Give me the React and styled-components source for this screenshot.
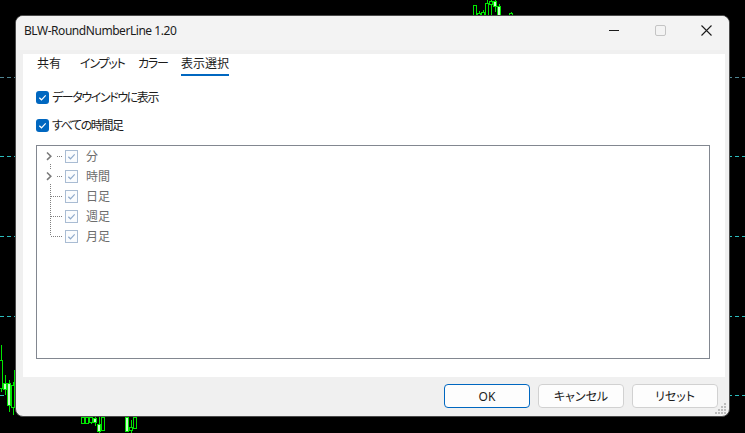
import React from 'react'
import styled, { createGlobalStyle } from 'styled-components'

const GlobalStyle = createGlobalStyle`
    html, body {
        margin: 0;
        padding: 0;
        background: #000;
    }
    * {
        box-sizing: border-box;
    }
`

const FONT = `"Noto Sans", "Noto Sans CJK JP", sans-serif`

// candles peeking out round the dialog: [x, wickTop, wickBottom, bodyTop, bodyBottom, filled]
const candles = [
    [1, 345, 392, 360, 388, false],
    [5, 375, 395, 383, 389, true],
    [9, 380, 412, 383, 405, true],
    [13, 382, 415, 385, 407, false],
    [16, 362, 390, 370, 387, false],
    [83, 417, 424, 417, 423, false],
    [87, 417, 424, 417, 423, false],
    [91, 417, 424, 417, 422, false],
    [95, 417, 426, 418, 422, true],
    [99, 417, 433, 424, 431, true],
    [103, 417, 431, 417, 430, false],
    [127, 417, 432, 417, 431, true],
    [131, 420, 433, 427, 430, false],
    [135, 417, 429, 417, 428, false],
    [475, 5, 15, 5, 15, false],
    [479, 11, 15, 13, 15, false],
    [483, 10, 15, 12, 15, false],
    [487, 0, 15, 3, 15, false],
    [491, 0, 15, 1, 4, false],
    [495, 0, 12, 1, 6, true],
    [499, 4, 15, 6, 15, true],
    [511, 12, 15, 13, 15, false],
]

const gridLines = [
    { y: 77.5, color: '#4f8592' },
    { y: 156.5, color: '#2bbcbc' },
    { y: 236.5, color: '#2bbcbc' },
    { y: 316.5, color: '#2bbcbc' },
    { y: 395.5, color: '#2bbcbc' },
]

const Chart = () => (
    <ChartSvg width="745" height="433" viewBox="0 0 745 433">
        {gridLines.map((l) => (
            <line key={l.y} x1="0" x2="745" y1={l.y} y2={l.y} stroke={l.color} strokeDasharray="4 3" />
        ))}
        {candles.map(([x, wt, wb, bt, bb, filled], i) => (
            <g key={i} shapeRendering="crispEdges">
                <line x1={x + 0.5} x2={x + 0.5} y1={wt} y2={wb} stroke="#00e600" />
                <rect
                    x={x - 1.5}
                    y={bt + 0.5}
                    width="3"
                    height={Math.max(bb - bt, 1)}
                    fill={filled ? '#c8ffc8' : '#000'}
                    stroke="#00e600"
                />
            </g>
        ))}
    </ChartSvg>
)

const CheckMark = ({ color }) => (
    <svg width="13" height="13" viewBox="0 0 13 13">
        <path d="M3.3 6.7 L5.5 8.8 L9.7 4.3" fill="none" stroke={color} strokeWidth="1.2" />
    </svg>
)

const Guide = ({ kind }) => (
    <svg width="28" height="20" viewBox="0 0 28 20" shapeRendering="crispEdges">
        {kind === 'first' && <line x1="13.5" x2="13.5" y1="10" y2="20" stroke="#808080" strokeDasharray="1 1" />}
        {kind === 'mid' && <line x1="13.5" x2="13.5" y1="0" y2="20" stroke="#808080" strokeDasharray="1 1" />}
        {kind === 'last' && <line x1="13.5" x2="13.5" y1="0" y2="10" stroke="#808080" strokeDasharray="1 1" />}
        {kind === 'expand' && <line x1="13.5" x2="13.5" y1="0" y2="20" stroke="#808080" strokeDasharray="1 1" />}
        <line x1="14" x2="25" y1="10.5" y2="10.5" stroke="#808080" strokeDasharray="1 1" />
        {(kind === 'first' || kind === 'expand') && (
            <>
                <rect x="7" y="3" width="12" height="14" fill="#fff" />
                <path
                    d="M10 6.5 L13.8 10.2 L10 13.9"
                    fill="none"
                    stroke="#7a7a7a"
                    strokeWidth="1.6"
                    shapeRendering="geometricPrecision"
                />
            </>
        )}
    </svg>
)

const treeItems = [
    { label: '分', kind: 'first' },
    { label: '時間', kind: 'expand' },
    { label: '日足', kind: 'mid' },
    { label: '週足', kind: 'mid' },
    { label: '月足', kind: 'last' },
]

const tabs = [
    { label: '共有' },
    { label: 'インプット', kana: true },
    { label: 'カラー', kana: true },
    { label: '表示選択', active: true },
]

const App = () => {
    return (
        <>
            <GlobalStyle />
            <Screen>
                <Chart />
                <Window>
                    <TitleBar>
                        <Title>BLW-RoundNumberLine 1.20</Title>
                        <Controls>
                            <ControlButton>
                                <svg width="10" height="10" viewBox="0 0 10 10" shapeRendering="crispEdges">
                                    <line x1="0" x2="10" y1="5.5" y2="5.5" stroke="#1b1b1b" />
                                </svg>
                            </ControlButton>
                            <ControlButton>
                                <svg width="11" height="11" viewBox="0 0 11 11">
                                    <rect x="0.5" y="0.5" width="10" height="10" rx="1.5" fill="none" stroke="#c4c4c4" />
                                </svg>
                            </ControlButton>
                            <ControlButton>
                                <svg width="11" height="11" viewBox="0 0 11 11">
                                    <path d="M0.5 0.5 L10.5 10.5 M10.5 0.5 L0.5 10.5" stroke="#1b1b1b" strokeWidth="1.1" />
                                </svg>
                            </ControlButton>
                        </Controls>
                    </TitleBar>
                    <Body>
                        <Panel>
                            <Tabs>
                                {tabs.map((t) => (
                                    <TabSlot key={t.label}>
                                        <Tab $active={t.active} $kana={t.kana}>
                                            {t.label}
                                        </Tab>
                                    </TabSlot>
                                ))}
                            </Tabs>
                            <Options>
                                <CheckRow>
                                    <CheckBox>
                                        <CheckMark color="#fff" />
                                    </CheckBox>
                                    <CheckLabel>データウインドウに表示</CheckLabel>
                                </CheckRow>
                                <CheckRow>
                                    <CheckBox>
                                        <CheckMark color="#fff" />
                                    </CheckBox>
                                    <CheckLabel>すべての時間足</CheckLabel>
                                </CheckRow>
                            </Options>
                            <TreeBox>
                                {treeItems.map((item) => (
                                    <TreeRow key={item.label}>
                                        <Guide kind={item.kind} />
                                        <TreeCheck>
                                            <CheckMark color="#8faacb" />
                                        </TreeCheck>
                                        <TreeLabel>{item.label}</TreeLabel>
                                    </TreeRow>
                                ))}
                            </TreeBox>
                        </Panel>
                        <Footer>
                            <Button $primary>OK</Button>
                            <Button>キャンセル</Button>
                            <Button>リセット</Button>
                        </Footer>
                        <Grip width="14" height="14" viewBox="0 0 14 14">
                            {[
                                [10, 2],
                                [7, 5],
                                [10, 5],
                                [4, 8],
                                [7, 8],
                                [10, 8],
                                [1, 11],
                                [4, 11],
                                [7, 11],
                                [10, 11],
                            ].map(([x, y]) => (
                                <rect key={`${x}-${y}`} x={x} y={y} width="2" height="2" fill="#bcbcbc" />
                            ))}
                        </Grip>
                    </Body>
                </Window>
            </Screen>
        </>
    )
}

const Screen = styled.div`
    position: relative;
    width: 745px;
    height: 433px;
    overflow: hidden;
    background: #000;
    font-family: ${FONT};
    font-feature-settings: 'palt';
    color: #1b1b1b;
`

const ChartSvg = styled.svg`
    position: absolute;
    inset: 0;
    display: block;
`

const Window = styled.div`
    position: absolute;
    left: 15px;
    top: 15px;
    width: 715px;
    height: 402px;
    display: flex;
    flex-direction: column;
    background: #f0f0f0;
    border: 1px solid #4a4a4a;
    border-radius: 8px;
    overflow: hidden;
`

const TitleBar = styled.div`
    height: 34px;
    padding: 0 0 6px 8px;
    display: flex;
    align-items: center;
    background: #f3f3f3;
`

const Title = styled.div`
    font-size: 12px;
    letter-spacing: -0.45px;
    color: #1b1b1b;
`

const Controls = styled.div`
    margin-left: auto;
    display: flex;
    align-self: flex-start;
`

const ControlButton = styled.div`
    width: 46px;
    height: 28px;
    display: flex;
    align-items: center;
    justify-content: center;
    svg {
        display: block;
    }
`

const Body = styled.div`
    position: relative;
    flex: 1;
    display: flex;
    flex-direction: column;
    padding: 4px 4px 0 7px;
`

const Panel = styled.div`
    height: 323px;
    background: #fff;
    display: flex;
    flex-direction: column;
`

const Tabs = styled.div`
    display: grid;
    grid-template-columns: 43px 58px 43px auto;
    padding-left: 14px;
    height: 22px;
`

const TabSlot = styled.div`
    display: flex;
`

const Tab = styled.div`
    height: 22px;
    line-height: 20px;
    font-size: 12px;
    letter-spacing: ${(p) => (p.$kana ? '-1.2px' : '0')};
    white-space: nowrap;
    color: #1b1b1b;
    border-bottom: 2px solid ${(p) => (p.$active ? '#0067c0' : 'transparent')};
`

const Options = styled.div`
    margin-top: 7px;
    padding-left: 13px;
    display: flex;
    flex-direction: column;
`

const CheckRow = styled.label`
    height: 28px;
    display: flex;
    align-items: center;
    gap: 3px;
`

const CheckBox = styled.span`
    width: 13px;
    height: 13px;
    border-radius: 3px;
    background: #0067c0;
    display: flex;
    svg {
        display: block;
    }
`

const CheckLabel = styled.span`
    font-size: 12px;
    letter-spacing: -1.4px;
    color: #1b1b1b;
`

const TreeBox = styled.div`
    margin: 6px 15px 0 13px;
    height: 214px;
    border: 1px solid #828790;
    background: #fff;
`

const TreeRow = styled.div`
    height: 20px;
    display: flex;
    align-items: center;
    svg {
        display: block;
    }
`

const TreeCheck = styled.span`
    width: 13px;
    height: 13px;
    border: 1px solid #a9bcd3;
    background: #fafcfe;
    display: flex;
    align-items: center;
    justify-content: center;
    svg {
        margin: -1px;
    }
`

const TreeLabel = styled.span`
    margin-left: 8px;
    font-size: 12px;
    color: #6d6d6d;
`

const Footer = styled.div`
    display: flex;
    justify-content: flex-end;
    gap: 8px;
    padding: 7px 7px 0 0;
`

const Button = styled.div`
    width: 86px;
    height: 24px;
    display: flex;
    align-items: center;
    justify-content: center;
    font-size: 12px;
    color: #1b1b1b;
    background: #fdfdfd;
    border: 1px solid ${(p) => (p.$primary ? '#0067c0' : '#d1d1d1')};
    border-radius: 4px;
`

const Grip = styled.svg`
    position: absolute;
    right: 1px;
    bottom: 1px;
    display: block;
`

export default App
